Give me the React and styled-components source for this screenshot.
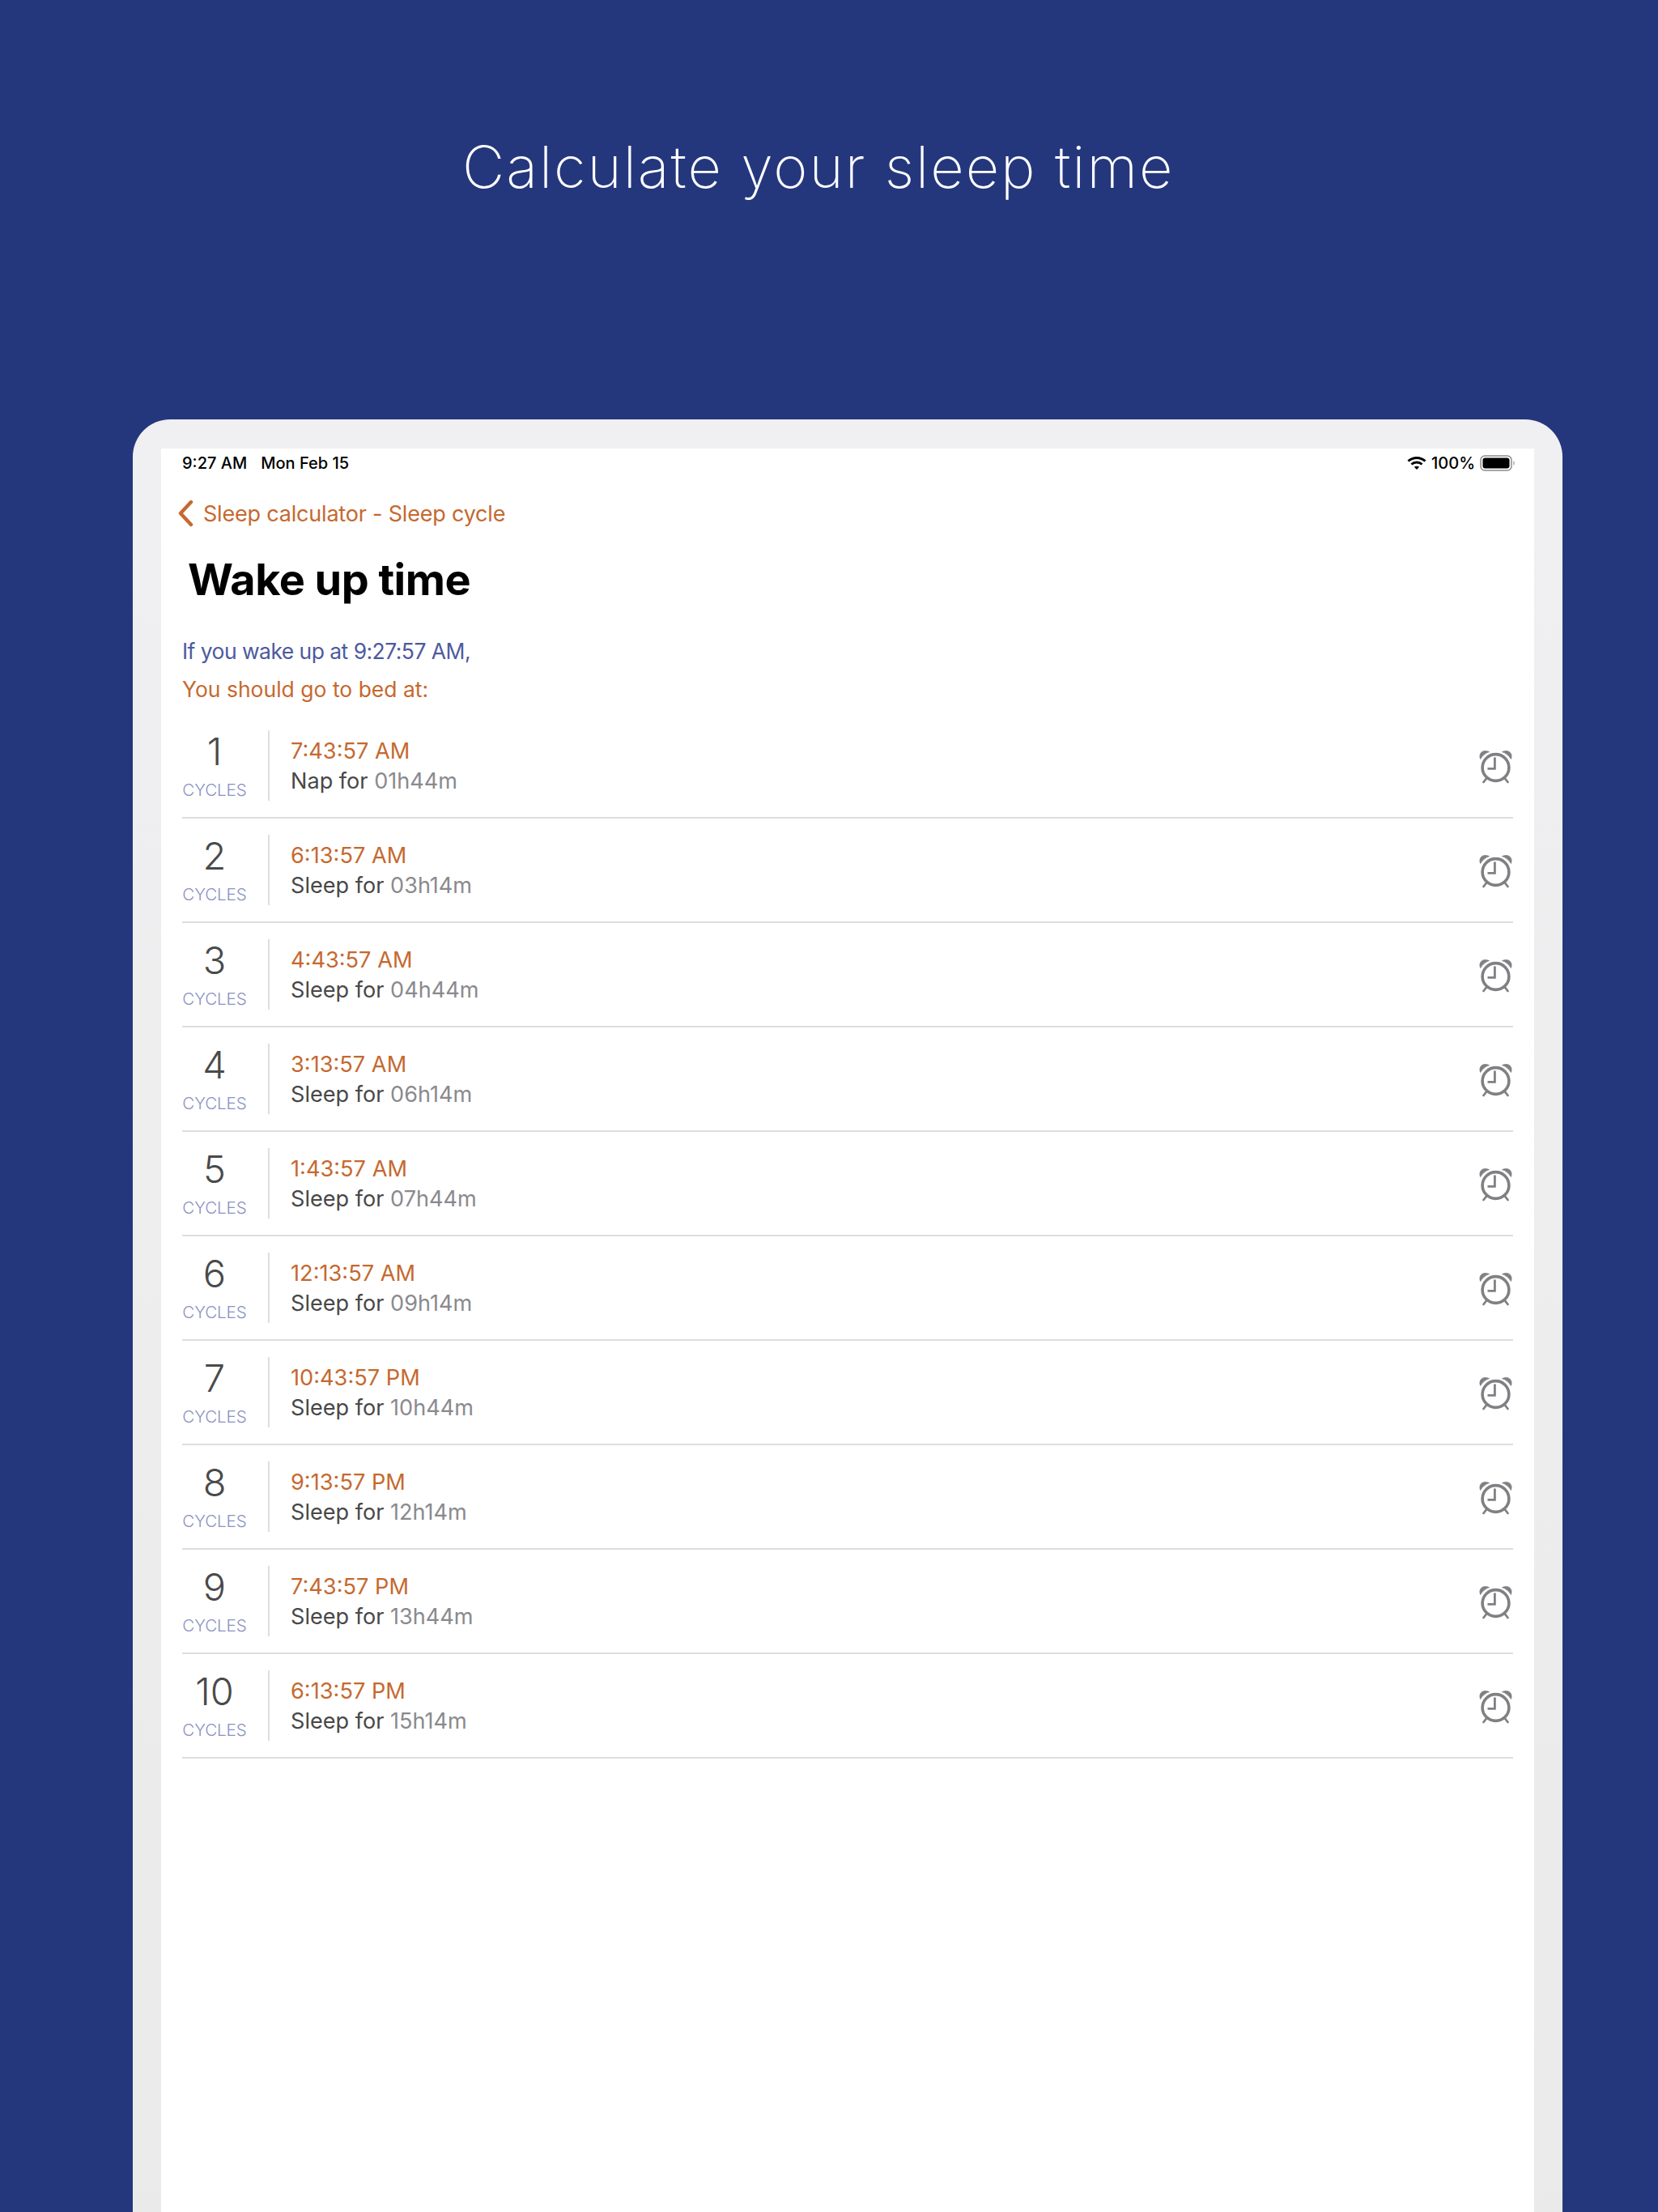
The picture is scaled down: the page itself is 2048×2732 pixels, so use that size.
import React from "react";
import styled, { createGlobalStyle } from "styled-components";

const GlobalStyle = createGlobalStyle`
  html, body {
    margin: 0;
    padding: 0;
    background: #25377c;
  }
  * {
    box-sizing: border-box;
  }
`;

const Page = styled.div`
  width: 2048px;
  height: 2732px;
  overflow: hidden;
  background: #25377c;
  font-family: Inter, "Liberation Sans", sans-serif;
`;

const Hero = styled.header`
  height: 518px;
  padding-top: 160px;
  padding-left: 571px;
`;

const HeroTitle = styled.h1`
  margin: 0;
  font-size: 72px;
  line-height: 92px;
  font-weight: 250;
  letter-spacing: 2px;
  color: #fff;
  white-space: nowrap;
`;

const Device = styled.div`
  width: 1766px;
  height: 2214px;
  margin-left: 164px;
  padding: 36px 35px 0 35px;
  background: linear-gradient(180deg, #f0f0f2, #eaeaea);
  border-radius: 46px 46px 0 0;
`;

const Screen = styled.main`
  height: 100%;
  background: #fff;
  padding: 0 26px;
`;

const StatusBar = styled.div`
  height: 36px;
  display: flex;
  align-items: center;
  justify-content: space-between;
  font-size: 20px;
  font-weight: 450;
  color: #000;
`;

const StatusGroup = styled.div`
  display: flex;
  align-items: center;
  gap: ${(p) => p.$gap}px;
  margin-right: ${(p) => p.$pull || 0}px;
`;

const BackLink = styled.div`
  display: flex;
  align-items: center;
  gap: 12px;
  height: 44px;
  margin-top: 22px;
  margin-left: -6px;
  font-size: 27px;
  letter-spacing: -0.2px;
  color: #c5692f;
`;

const PageTitle = styled.h2`
  margin: 25px 0 0 7px;
  font-size: 54px;
  line-height: 70px;
  font-weight: 700;
  letter-spacing: -0.55px;
  color: #000;
`;

const Intro = styled.p`
  margin: ${(p) => p.$top}px 0 0;
  font-size: 26.5px;
  line-height: 40px;
  letter-spacing: ${(p) => p.$spacing}px;
  color: ${(p) => p.$color};
`;

const List = styled.div`
  margin-top: 11px;
`;

const Row = styled.div`
  height: 129px;
  display: flex;
  align-items: center;
  border-bottom: 2px solid #dedee0;
`;

const CycleCol = styled.div`
  width: 80px;
  display: flex;
  flex-direction: column;
  align-items: center;
`;

const CycleNum = styled.div`
  font-size: 47px;
  line-height: 52px;
  font-weight: 340;
  color: #4a4a4a;
`;

const CycleLabel = styled.div`
  margin-top: 8px;
  font-size: 20.6px;
  line-height: 28px;
  font-weight: 300;
  letter-spacing: -0.1px;
  color: #8a92c2;
`;

const RowInfo = styled.div`
  flex: 1;
  height: 87px;
  margin-left: 26px;
  padding-left: 26px;
  border-left: 2px solid #dedee0;
  display: flex;
  flex-direction: column;
  justify-content: center;
`;

const TimeText = styled.div`
  font-size: 27.2px;
  line-height: 37px;
  color: #c5692f;
`;

const SleepText = styled.div`
  font-size: 27.1px;
  line-height: 37px;
  color: #484848;
`;

const Duration = styled.span`
  color: #8a8a8e;
`;

const AlarmSvg = styled.svg`
  margin-top: 2px;
  flex: none;
`;

const rows = [
  ["1", "7:43:57 AM", "Nap for", "01h44m"],
  ["2", "6:13:57 AM", "Sleep for", "03h14m"],
  ["3", "4:43:57 AM", "Sleep for", "04h44m"],
  ["4", "3:13:57 AM", "Sleep for", "06h14m"],
  ["5", "1:43:57 AM", "Sleep for", "07h44m"],
  ["6", "12:13:57 AM", "Sleep for", "09h14m"],
  ["7", "10:43:57 PM", "Sleep for", "10h44m"],
  ["8", "9:13:57 PM", "Sleep for", "12h14m"],
  ["9", "7:43:57 PM", "Sleep for", "13h44m"],
  ["10", "6:13:57 PM", "Sleep for", "15h14m"],
];

function AlarmIcon() {
  return (
    <AlarmSvg width="42" height="42" viewBox="0 0 42 42" fill="none">
      <circle cx="20.5" cy="22" r="16.4" stroke="#808084" strokeWidth="3.6" />
      <path d="M19.4 9.5V23.4H10.5" stroke="#808084" strokeWidth="2.8" />
      <path d="M1.6 11.5C-1 5 4 -1.2 12.5 2.6C8 3.8 4.5 7 1.6 11.5Z" fill="#808084" stroke="#808084" strokeWidth="0.8" strokeLinejoin="round" />
      <path d="M39.4 11.5C42 5 37 -1.2 28.5 2.6C33 3.8 36.5 7 39.4 11.5Z" fill="#808084" stroke="#808084" strokeWidth="0.8" strokeLinejoin="round" />
      <path d="M9 35.5L5.5 40M32 35.5L35.5 40" stroke="#808084" strokeWidth="2.8" strokeLinecap="round" />
    </AlarmSvg>
  );
}

function WifiIcon() {
  return (
    <svg width="24" height="18" viewBox="0 0 24 18" fill="none" stroke="#000" strokeWidth="3">
      <path d="M1.5 6.5C7.5 1 16.5 1 22.5 6.5" />
      <path d="M5.5 10.5C9 7.3 15 7.3 18.5 10.5" />
      <path d="M12 17L8.8 13.8C10.6 12.5 13.4 12.5 15.2 13.8Z" fill="#000" stroke="none" />
    </svg>
  );
}

function BatteryIcon() {
  return (
    <svg width="44" height="20" viewBox="0 0 44 20">
      <rect x="1" y="1" width="38" height="18" rx="5" fill="none" stroke="#8c8c8c" strokeWidth="1.5" />
      <rect x="3.5" y="3.5" width="33" height="13" rx="3" fill="#000" />
      <path d="M41.5 7C43 7.8 43 12.2 41.5 13Z" fill="#8c8c8c" />
    </svg>
  );
}

function BackChevron() {
  return (
    <svg width="20" height="34" viewBox="0 0 20 34" fill="none">
      <path d="M17 3L4 17L17 31" stroke="#c5692f" strokeWidth="4.4" strokeLinecap="round" strokeLinejoin="round" />
    </svg>
  );
}

export default function App() {
  return (
    <Page>
      <GlobalStyle />
      <Hero>
        <HeroTitle>Calculate your sleep time</HeroTitle>
      </Hero>
      <Device>
        <Screen>
          <StatusBar>
            <StatusGroup $gap={17}>
              <span>9:27 AM</span>
              <span>Mon Feb 15</span>
            </StatusGroup>
            <StatusGroup $gap={6} $pull={-3}>
              <WifiIcon />
              <span>100%</span>
              <BatteryIcon />
            </StatusGroup>
          </StatusBar>
          <BackLink>
            <BackChevron />
            Sleep calculator - Sleep cycle
          </BackLink>
          <PageTitle>Wake up time</PageTitle>
          <Intro $top={33} $color="#4d5a9e" $spacing={-0.55}>If you wake up at 9:27:57 AM,</Intro>
          <Intro $top={7} $color="#c5692f" $spacing={0}>You should go to bed at:</Intro>
          <List>
            {rows.map(([num, time, label, duration]) => (
              <Row key={num}>
                <CycleCol>
                  <CycleNum>{num}</CycleNum>
                  <CycleLabel>CYCLES</CycleLabel>
                </CycleCol>
                <RowInfo>
                  <TimeText>{time}</TimeText>
                  <SleepText>
                    {label} <Duration>{duration}</Duration>
                  </SleepText>
                </RowInfo>
                <AlarmIcon />
              </Row>
            ))}
          </List>
        </Screen>
      </Device>
    </Page>
  );
}
